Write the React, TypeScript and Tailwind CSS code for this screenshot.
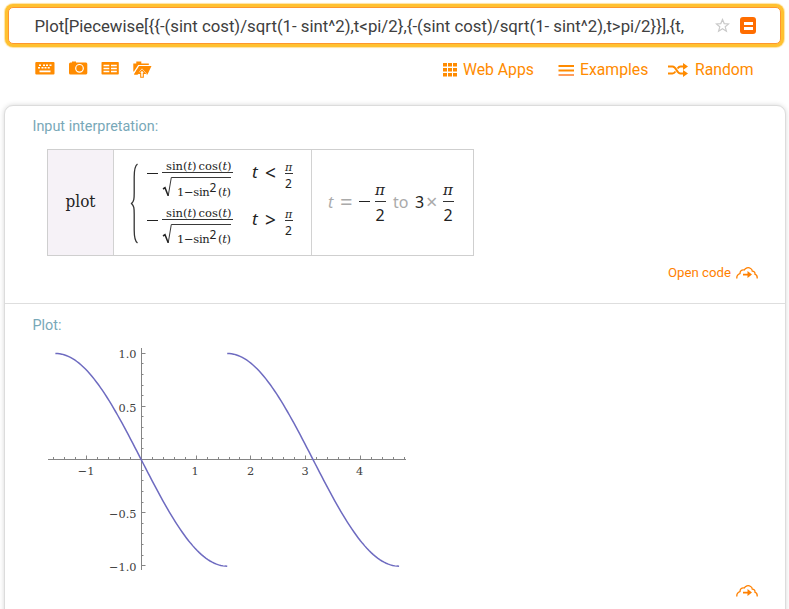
import React from "react";

const SERIF = "font-['DejaVu_Serif',serif]";
const MATH = "font-['Noto_Sans','DejaVu_Sans',sans-serif]";
const PLOT_FONT = "'DejaVu Serif', serif";

function KeyboardIcon() {
  return (
    <svg width="20" height="16" viewBox="0 0 20 16" fill="#ff8b00">
      <rect x="0.3" y="1" width="19.2" height="12.500" rx="1" />
      <g fill="#fff">
        <path d="M4 3.500h2V5H4zM8 3.500h2V5H8zM11 3.500h2V5h-2zM14.500 3.500h2V5h-2zM3 6h2v1.500H3zM6.500 6h2v1.500h-2zM9.500 6h2v1.500h-2zM12.700 6h2v1.500h-2zM4.500 9.500h11v1.700h-11z" />
      </g>
    </svg>
  );
}

function CameraIcon() {
  return (
    <svg width="19" height="16" viewBox="0 0 19 16">
      <path d="M1.500 1.500h1.500v-1h4v1H17a1.500 1.500 0 0 1 1.300 1.500v9A1.500 1.500 0 0 1 17 13.500H1.500a1.500 1.500 0 0 1-1.500-1.500v-9A1.500 1.500 0 0 1 1.500 1.500z" fill="#ff8b00" />
      <circle cx="10.500" cy="7.300" r="3.800" fill="none" stroke="#fff" strokeWidth="1.200" />
    </svg>
  );
}

function TableIcon() {
  return (
    <svg width="18" height="16" viewBox="0 0 18 16">
      <rect x="0.500" y="1" width="17.300" height="12.500" rx="0.800" fill="#ff8b00" />
      <path d="M2.500 4.500H8.300M10 4.500h5.800M2.500 7.500H8.300M10 7.500h5.800M2.500 10.500H8.300M10 10.500h5.800" stroke="#fff" strokeWidth="1.500" />
    </svg>
  );
}

function FolderUploadIcon() {
  return (
    <svg width="19" height="18" viewBox="0 0 19 18" fill="#ff8b00">
      <path d="M0.300 10.500V2.500h3V0.500h5v2h7.500V4H5.200L1 10.500z" />
      <path d="M6 5h12.500L14.500 13.500H1z" />
      <path d="M9 7.500l4.500 5v2h-9v-2z" fill="#fff" />
      <path d="M1 13.500l3-5 2.500 2-1.500 3z" />
      <path d="M9 9l3.200 3.400h-1.900v3.800H7.700v-3.800H5.800z" fill="#fff" stroke="#ff8b00" strokeWidth="1.100" />
    </svg>
  );
}

function GridIcon() {
  return (
    <svg width="14" height="14" viewBox="0 0 14 14" fill="#ff8b00">
      {[0, 5, 10].map((x) => [0, 5, 10].map((y) => <rect key={`${x}-${y}`} x={x} y={y} width="4" height="3.500" />))}
    </svg>
  );
}

function ListIcon() {
  return (
    <svg width="16" height="13" viewBox="0 0 16 13">
      <path d="M0.500 2h15.500M0.500 6.500h15.500" stroke="#ff8b00" strokeWidth="2" />
      <path d="M0.500 11h15.500" stroke="#ff9d5c" strokeWidth="2" />
    </svg>
  );
}

function ShuffleIcon() {
  return (
    <svg width="21" height="14" viewBox="0 0 21 14" fill="none" stroke="#ff8b00" strokeWidth="2">
      <path d="M0 3.500h4.500c4 0 4 7 8 7h3M0 10.500h4.500c1.400 0 2.200-.9 3-2M9.500 5.500c.9-1.200 1.600-2 3-2h3" />
      <path d="M15 0l5 3.500-5 3.500zM15 7l5 3.500-5 3.500z" fill="#ff8b00" stroke="none" />
    </svg>
  );
}

function CloudIcon() {
  return (
    <svg width="22" height="14" viewBox="0 0 22 14">
      <path d="M1 12.500C0.300 10 2 8 4 7.600 3.800 5 6 3.300 8.300 4c1-2.200 4-3 6-1.800 1.500.8 2 1.800 2 3 2 .1 3 1.400 2.600 3 1.600.6 2.500 2 2.300 4.300" fill="none" stroke="#ff8000" strokeWidth="1.300" />
      <path d="M7 7.700h4.500V5l4.500 3.500-4.500 3.500V9.500H7z" fill="#ff8000" />
    </svg>
  );
}

function Brace() {
  return (
    <svg width="10" height="82" viewBox="0 0 10 82" fill="none" stroke="#333" strokeWidth="1.300">
      <path d="M7.500 1C4.500 3 4.200 8 4.200 14v16c0 6-.2 8-2.700 10.500 2.500 2.500 2.700 4.500 2.700 10.500v16c0 6 .3 11 3.300 13" />
    </svg>
  );
}

function Root() {
  return (
    <svg width="70" height="22" viewBox="0 0 70 22" fill="none" stroke="#222" className="col-start-1 row-start-1">
      <path d="M1 13l2-1.300 3.200 8" strokeWidth="1.500" />
      <path d="M6.200 20L9.300 1.500H69" strokeWidth="0.900" />
    </svg>
  );
}

function Minus() {
  return <span className="h-px w-[11px] bg-[#222]" />;
}

function SmallFraction() {
  return (
    <span className={`flex w-[9px] flex-col items-center text-[12px] text-[#222] ${MATH}`}>
      <span className="h-[13px] font-['DejaVu_Serif'] text-[11px] leading-[15px] italic">π</span>
      <span className="h-px w-[8px] bg-[#333]" />
      <span className="h-[17px] leading-[20px]">2</span>
    </span>
  );
}

function LargeFraction() {
  return (
    <span className={`flex w-[10px] flex-col items-center text-[16px] text-[#222] ${MATH}`}>
      <span className="h-[21px] font-['DejaVu_Serif'] text-[15px] leading-[20px] italic">π</span>
      <span className="h-px w-[11px] bg-[#333]" />
      <span className="h-[21px] leading-[27px]">2</span>
    </span>
  );
}

function Case({ relation }: { relation: string }) {
  return (
    <div className="flex h-[47px] text-[#222]">
      <span className="flex pt-[16px]"><Minus /></span>
      <div className={`ml-[4px] flex w-[71px] flex-col ${SERIF}`}>
        <span className="h-[15px] shrink-0 pl-[4px] text-[11.500px] leading-[19px] whitespace-nowrap">
          sin(<i>t</i>)<span className="ml-[2px]">cos(<i>t</i>)</span>
        </span>
        <span className="h-px w-[71px] shrink-0 bg-[#333]" />
        <div className="mt-[3px] grid">
          <Root />
          <span className="col-start-1 row-start-1 h-[28px] pl-[15px] text-[11.500px] leading-[31px] tracking-[-0.3px] whitespace-nowrap">
            1−sin<span className={`relative -top-[4px] text-[12px] ${MATH}`}>2</span><span className="ml-[2px]">(<i>t</i>)</span>
          </span>
        </div>
      </div>
      <span className={`ml-[19px] w-[13px] pt-[5px] text-[17px] leading-[20px] italic ${MATH}`}>t</span>
      <span className={`w-[19px] pt-[5px] text-[19px] leading-[22px] ${MATH}`}>{relation}</span>
      <span className="pt-[3px]"><SmallFraction /></span>
    </div>
  );
}

const X0 = 93.5;
const Y0 = 114.5;
const UX = 54.7;
const UY = 106.4;

function curve(from: number, sign: number) {
  const points: string[] = [];
  for (let i = 0; i <= 80; i++) {
    const t = from + (Math.PI * i) / 80;
    points.push(`${(X0 - 0.2 + t * UX).toFixed(2)},${(Y0 + 0.3 - sign * Math.sin(t) * UY).toFixed(2)}`);
  }
  return points.join(" ");
}

function PlotChart() {
  const xTicks = Array.from({ length: 33 }, (_, i) => i - 8).filter((i) => i !== 0);
  const yTicks = Array.from({ length: 21 }, (_, i) => i - 10).filter((i) => i !== 0);
  return (
    <svg width="360" height="230" viewBox="0 0 360 230">
      <g stroke="#858585" strokeWidth="1">
        <path d="M0 114.500H358M93.500 3V225" fill="none" />
        {xTicks.map((i) => {
          const x = Math.floor(X0 + i * 0.2 * UX) + 0.5;
          return <line key={i} x1={x} x2={x} y1={Y0} y2={Y0 - (i % 5 === 0 ? 4 : 2.5)} />;
        })}
        {yTicks.map((i) => {
          const y = Math.floor(Y0 - i * 0.1 * UY) + 0.5;
          return <line key={i} x1={X0} x2={X0 + (i % 5 === 0 ? 4 : 2)} y1={y} y2={y} />;
        })}
      </g>
      <g fill="none" stroke="#6e6bc0" strokeWidth="1.500">
        <polyline points={curve(-Math.PI / 2, -1)} />
        <polyline points={curve(Math.PI / 2, 1)} />
      </g>
      <g fontFamily={PLOT_FONT} fontSize="11.300" fill="#404040">
        <text x="88.500" y="13" textAnchor="end">1.0</text>
        <text x="88.500" y="67" textAnchor="end">0.5</text>
        <text x="88.500" y="173" textAnchor="end">−0.5</text>
        <text x="88.500" y="225.500" textAnchor="end">−1.0</text>
        <text x="38" y="130" textAnchor="middle">−1</text>
        <text x="147" y="130" textAnchor="middle">1</text>
        <text x="202.500" y="130" textAnchor="middle">2</text>
        <text x="257" y="130" textAnchor="middle">3</text>
        <text x="311.500" y="130" textAnchor="middle">4</text>
      </g>
    </svg>
  );
}

export default function App() {
  return (
    <div className="flex h-[609px] w-[789px] flex-col overflow-hidden bg-white font-[Roboto,sans-serif]">
      <div className="mt-[7px] ml-[8px] flex h-[37px] w-[773px] shrink-0 items-center rounded-[5px] border border-[#ff962d] bg-white shadow-[0_0_0_3px_#ffc130,0_0_1px_4px_#ffe3a0]">
        <span className="ml-[25.500px] w-[680px] pt-[2px] text-[16.770px] whitespace-nowrap text-[#404040]">
          Plot[Piecewise[{"{{"}-(sint cost)/sqrt(1- sint^2),t&lt;pi/2{"}"},{"{"}-(sint cost)/sqrt(1- sint^2),t&gt;pi/2{"}}"}],{"{"}t,
        </span>
        <svg width="15" height="15" viewBox="0 0 15 15" fill="none" stroke="#c9c9c9" strokeWidth="1.200">
          <path d="M7.500 1.500l1.700 4.100 4.500.3-3.500 2.900 1.200 4.400-3.900-2.500-3.900 2.500 1.200-4.400L1.300 5.900l4.500-.3z" />
        </svg>
        <span className="ml-[10.500px] flex h-[17px] w-[16px] flex-col items-center justify-center gap-[2px] rounded-[3px] bg-[#ff6d00]">
          <span className="h-[3px] w-[9px] bg-white" />
          <span className="h-[3px] w-[9px] bg-white" />
        </span>
      </div>

      <div className="flex h-[61px] shrink-0 pt-[17px] text-[15.750px] text-[#ff8b00]">
        <div className="flex w-[443px] pl-[35px]">
          <span className="w-[34px]"><KeyboardIcon /></span>
          <span className="w-[32px]"><CameraIcon /></span>
          <span className="w-[32px]"><TableIcon /></span>
          <span><FolderUploadIcon /></span>
        </div>
        <div className="flex h-[18px] items-center leading-[18px]">
          <span className="flex w-[115px] items-center gap-[6px]"><GridIcon />Web Apps</span>
          <span className="flex w-[110px] items-center gap-[6px]"><ListIcon />Examples</span>
          <span className="flex items-center gap-[6px]"><ShuffleIcon />Random</span>
        </div>
      </div>

      <main className="ml-[4px] h-[520px] w-[782px] shrink-0 rounded-[9px] border border-[#dcdcdc] bg-white shadow-[0_0_5px_rgba(0,0,0,0.16)]">
        <section className="flex h-[198px] flex-col border-b border-[#dedede]">
          <h2 className="mt-[12px] ml-[27.500px] h-[18px] text-[14.400px] leading-[18px] text-[#78a8b8]">Input interpretation:</h2>
          <div className="mt-[13px] ml-[42px] flex h-[107px] w-[427px] shrink-0 border border-[#cfcfcf]">
            <div className="flex w-[66px] items-center justify-center border-r border-[#d2d2d2] bg-[#f6f2f7] pb-[2px] font-['DejaVu_Serif_Condensed','DejaVu_Serif',serif] text-[17px] text-[#222]">plot</div>
            <div className="flex w-[198px] border-r border-[#d2d2d2]">
              <span className="mt-[13px] ml-[16px] w-[17px]"><Brace /></span>
              <div className="mt-[7px]">
                <Case relation="<" />
                <Case relation=">" />
              </div>
            </div>
            <div className={`flex h-[103px] items-center pl-[16px] text-[16px] text-[#aaa] ${MATH}`}>
              <span className="w-[12px] italic">t</span>
              <span className="w-[19px] text-[22px]">=</span>
              <Minus />
              <span className="ml-[5px]"><LargeFraction /></span>
              <span className="ml-[8px] w-[22px]">to</span>
              <span className="w-[11px] text-[#222]">3</span>
              <span className="w-[17px] text-[20px]">×</span>
              <LargeFraction />
            </div>
          </div>
          <div className="mt-[7px] ml-[663px] flex h-[20px] items-center gap-[5px] text-[13.200px] leading-[20px] text-[#ff8000]">Open code<CloudIcon /></div>
        </section>
        <section>
          <h2 className="mt-[13px] ml-[27.500px] h-[18px] text-[14.400px] leading-[18px] text-[#78a8b8]">Plot:</h2>
          <div className="mt-[10px] ml-[43px] h-[230px]"><PlotChart /></div>
          <div className="mt-[9px] ml-[731px]"><CloudIcon /></div>
        </section>
      </main>
    </div>
  );
}
